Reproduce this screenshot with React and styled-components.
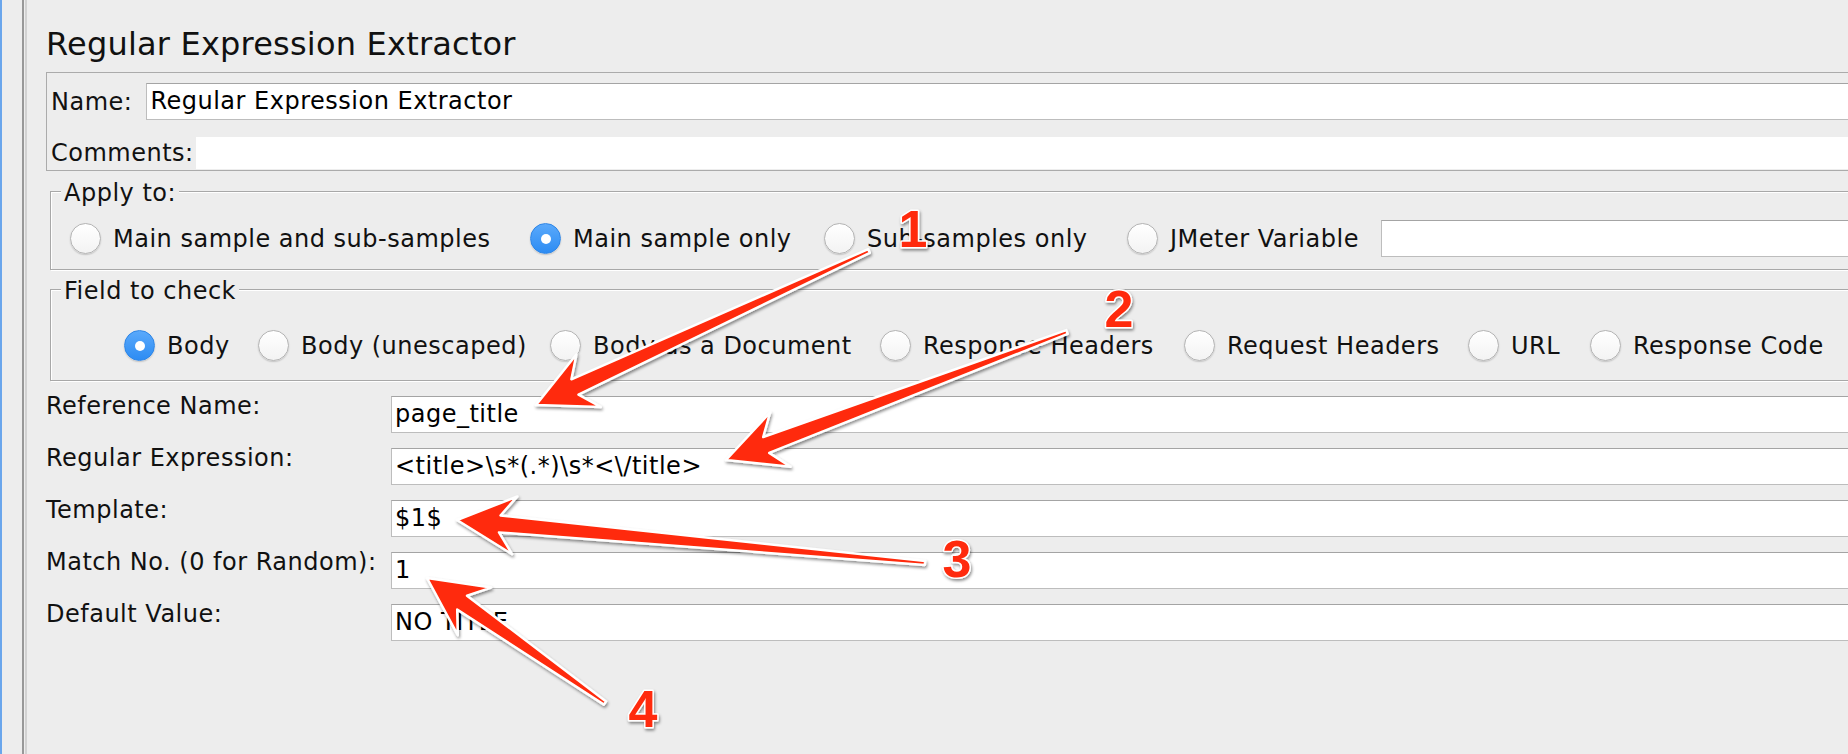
import React from 'react'
import styled, { createGlobalStyle } from 'styled-components'

const GlobalStyle = createGlobalStyle`
html, body {
    margin: 0;
    padding: 0;
    background: #ededed;
}
body {
    font-family: "DejaVu Sans", "Liberation Sans", sans-serif;
    color: #111;
}
`

let apply_options = [
    { title: `Main sample and sub-samples`, w: 460 },
    { title: `Main sample only`, w: 294, checked: true },
    { title: `Sub-samples only`, w: 303 },
    { title: `JMeter Variable`, w: 254 },
]

let field_options = [
    { title: `Body`, w: 134, checked: true },
    { title: `Body (unescaped)`, w: 292 },
    { title: `Body as a Document`, w: 330 },
    { title: `Response Headers`, w: 304 },
    { title: `Request Headers`, w: 284 },
    { title: `URL`, w: 122 },
    { title: `Response Code` },
]

let rows = [
    { label: `Reference Name:`, value: `page_title` },
    { label: `Regular Expression:`, value: `<title>\\s*(.*)\\s*<\\/title>` },
    { label: `Template:`, value: `$1$` },
    { label: `Match No. (0 for Random):`, value: `1` },
    { label: `Default Value:`, value: `NO TITLE` },
]

// callouts drawn over the form: tip of the head, end of the tail
let arrows = [
    { tip: [536, 405], tail: [869, 251] },
    { tip: [726, 460], tail: [1067, 332] },
    { tip: [457, 520], tail: [925, 563] },
    { tip: [427, 578], tail: [605, 703] },
]

let numbers = [
    { text: `1`, x: 913, y: 247 },
    { text: `2`, x: 1119, y: 327 },
    { text: `3`, x: 957, y: 577 },
    { text: `4`, x: 643, y: 727 },
]

let arrowPoints = ({ tip, tail }) => {
    let head = 58, spread = 29, neck = 17, end = 4
    let dx = tail[0] - tip[0]
    let dy = tail[1] - tip[1]
    let len = Math.hypot(dx, dy)
    let ux = dx / len, uy = dy / len
    let vx = -uy, vy = ux
    let pt = (u, v) => [tip[0] + ux * u + vx * v, tip[1] + uy * u + vy * v]
    return [
        pt(0, 0),
        pt(head, spread),
        pt(head * 0.74, neck / 2),
        pt(len, end / 2),
        pt(len, -end / 2),
        pt(head * 0.74, -neck / 2),
        pt(head, -spread),
    ].map(p => p.map(n => n.toFixed(1)).join(`,`)).join(` `)
}

let Radio = ({ item }) => (
    <RadioItem w={item.w} >
        <RadioDot checked={item.checked} />
        <RadioLabel>{item.title}</RadioLabel>
    </RadioItem>
)

let main = () => {
    return (
        <Frame>
            <GlobalStyle />
            <BlueEdge />
            <Gutter />
            <Divider />
            <Content>
                <Title>Regular Expression Extractor</Title>
                <NamePanel>
                    <NameRow>
                        <Label>Name:</Label>
                        <Field>Regular Expression Extractor</Field>
                    </NameRow>
                    <CommentsRow>
                        <Label>Comments:</Label>
                        <CommentsField />
                    </CommentsRow>
                </NamePanel>
                <Group>
                    <Legend>Apply to:</Legend>
                    <OptionsRow>
                        {
                            apply_options.map((item, index) => <Radio key={index} item={item} />)
                        }
                        <Field />
                    </OptionsRow>
                </Group>
                <Group loose >
                    <Legend>Field to check</Legend>
                    <OptionsRow indent={54} >
                        {
                            field_options.map((item, index) => <Radio key={index} item={item} />)
                        }
                    </OptionsRow>
                </Group>
                <Form>
                    {
                        rows.map((row, index) => (
                            <React.Fragment key={index} >
                                <RowLabel>{row.label}</RowLabel>
                                <Field>{row.value}</Field>
                            </React.Fragment>
                        ))
                    }
                </Form>
            </Content>
            <Callouts width={1848} height={754} viewBox={`0 0 1848 754`} >
                <defs>
                    <filter id={`shade`} x={`-20%`} y={`-20%`} width={`140%`} height={`140%`} >
                        <feDropShadow dx={`1`} dy={`2`} stdDeviation={`1.6`} floodColor={`#000`} floodOpacity={`0.45`} />
                    </filter>
                </defs>
                {
                    arrows.map((item, index) => (
                        <polygon key={index} points={arrowPoints(item)} fill={`#ff2b0a`} stroke={`#fff`} strokeWidth={`2.5`} strokeLinejoin={`round`} filter={`url(#shade)`} />
                    ))
                }
                {
                    numbers.map((item, index) => (
                        <Digit key={index} x={item.x} y={item.y} textAnchor={`middle`} filter={`url(#shade)`} >{item.text}</Digit>
                    ))
                }
            </Callouts>
        </Frame>
    )
}

const Frame = styled.div`
display: flex;
position: relative;
height: 754px;
overflow: hidden;
background: #ededed;
`

const BlueEdge = styled.div`
width: 2px;
flex: none;
background: #6aa6ec;
`

const Gutter = styled.div`
width: 20px;
flex: none;
`

const Divider = styled.div`
width: 2px;
flex: none;
background: #989898;
box-shadow: 3px 0 0 #d2d2d2;
`

const Content = styled.div`
flex: 1;
min-width: 0;
padding-left: 22px;
margin-right: -40px;
letter-spacing: 0.5px;
`

const Title = styled.div`
padding-top: 24px;
font-size: 32px;
line-height: 40px;
letter-spacing: 0.2px;
color: #111;
`

const NamePanel = styled.div`
box-sizing: border-box;
margin-top: 8px;
padding: 10px 0 0 4px;
height: 99px;
border: 1px solid #ababab;
`

const NameRow = styled.div`
display: flex;
align-items: center;
height: 37px;
`

const CommentsRow = styled.div`
display: flex;
align-items: center;
height: 32px;
margin-top: 17px;
`

const Label = styled.div`
font-size: 24px;
line-height: 24px;
margin-right: 14px;
white-space: nowrap;
`

const Field = styled.div`
flex: 1;
box-sizing: border-box;
height: 37px;
padding-left: 3px;
background: #fff;
border: 1px solid #bdbdbd;
border-top-color: #a4a4a4;
font-size: 24px;
line-height: 35px;
color: #000;
white-space: nowrap;
overflow: hidden;
`

const CommentsField = styled.div`
flex: 1;
align-self: stretch;
margin-left: -12px;
background: #fff;
`

const Group = styled.fieldset`
min-width: 0;
margin: ${props => props.loose ? 5 : 6}px 0 0 4px;
padding: ${props => props.loose ? `24px 0 16px 19px` : `15px 0 12px 19px`};
border: 1px solid #a8a8a8;
box-shadow: inset 1px 1px 0 #fff, 1px 1px 0 #fff;
`

const Legend = styled.legend`
margin-left: -9px;
padding: 4px 3px 0 3px;
font-size: 24px;
line-height: 24px;
background: #ededed;
color: #111;
`

const OptionsRow = styled.div`
display: flex;
align-items: center;
height: 37px;
padding-left: ${props => props.indent || 0}px;
`

const RadioItem = styled.div`
display: flex;
align-items: center;
flex: none;
width: ${props => props.w ? `${props.w}px` : `auto`};
`

const RadioDot = styled.div`
position: relative;
flex: none;
box-sizing: border-box;
width: 31px;
height: 31px;
border-radius: 50%;
border: 1px solid ${props => props.checked ? `#2f86e6` : `#b4b4b4`};
background: ${props => props.checked ? `linear-gradient(#5aa9fb, #2d8cf3)` : `linear-gradient(#ffffff, #f3f3f3)`};
box-shadow: 0 1px 1.5px rgba(0, 0, 0, 0.18);
&::after {
    content: '';
    display: ${props => props.checked ? `block` : `none`};
    position: absolute;
    left: 50%;
    top: 50%;
    width: 10px;
    height: 10px;
    margin: -5px 0 0 -5px;
    border-radius: 50%;
    background: #fff;
}
`

const RadioLabel = styled.span`
margin-left: 12px;
font-size: 24px;
line-height: 24px;
white-space: nowrap;
`

const Form = styled.div`
display: grid;
grid-template-columns: 345px 1fr;
row-gap: 15px;
margin-top: 15px;
`

const RowLabel = styled.div`
align-self: start;
margin-top: -2px;
font-size: 24px;
line-height: 24px;
white-space: nowrap;
`

const Callouts = styled.svg`
position: absolute;
left: 0;
top: 0;
pointer-events: none;
`

const Digit = styled.text`
font-family: "Liberation Sans", Arial, sans-serif;
font-weight: 700;
font-size: 52px;
fill: #ff2b0a;
stroke: #fff;
stroke-width: 3px;
paint-order: stroke;
stroke-linejoin: round;
`

export default main
